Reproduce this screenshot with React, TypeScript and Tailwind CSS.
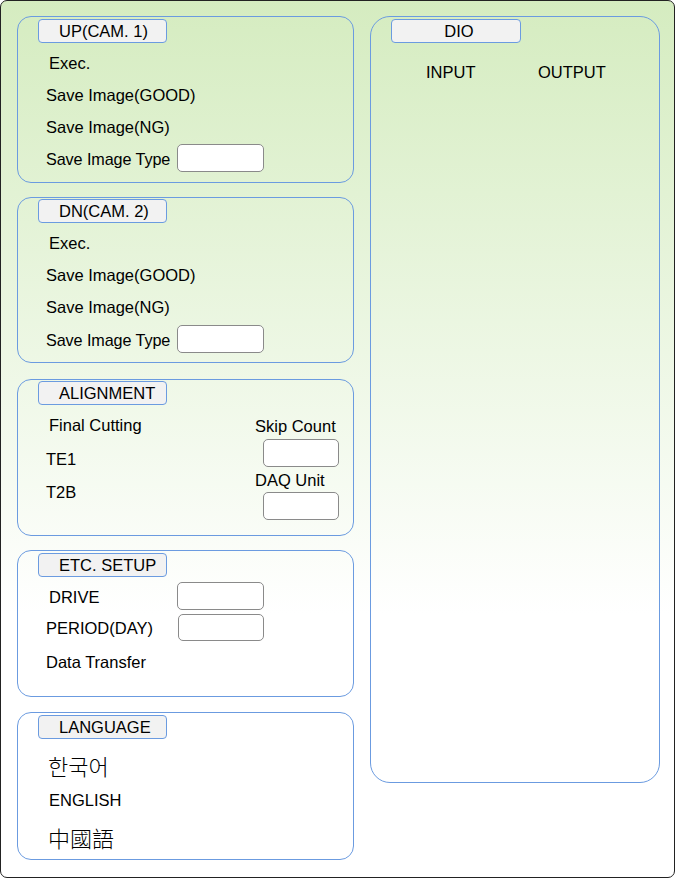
import React from 'react';

const font = { fontFamily: '"Liberation Sans", Arial, sans-serif' };

const Title: React.FC<{ label: string; className?: string }> = ({ label, className = '' }) => (
  <div
    className={`ml-[20px] w-[129px] h-[24px] shrink-0 rounded-[4px] border border-[#6b9be0] bg-[#f2f2f2] text-[16.5px] leading-[22px] text-black ${className}`}
  >
    {label}
  </div>
);

const Field: React.FC<{ className?: string }> = ({ className = '' }) => (
  <div className={`shrink-0 rounded-[5px] border border-[#8a8a8a] bg-white ${className}`} />
);

const Text: React.FC<{ children: React.ReactNode; className?: string }> = ({ children, className = '' }) => (
  <div className={`pt-[1px] text-[16.5px] leading-[20px] text-black whitespace-nowrap ${className}`}>{children}</div>
);

const Panel: React.FC<{ className?: string; children: React.ReactNode }> = ({ className = '', children }) => (
  <div className={`flex flex-col shrink-0 rounded-[14px] border border-[#6b9be0] ${className}`}>{children}</div>
);

const CamPanel: React.FC<{ title: string; top: string; className?: string; inputTop: string }> = ({
  title,
  top,
  className = '',
  inputTop,
}) => (
  <Panel className={className}>
    <Title label={title} className={`${top} pl-[20px] text-left`} />
    <Text className="mt-[9px] pl-[31px]">Exec.</Text>
    <Text className="mt-[11px] pl-[28px]">Save Image(GOOD)</Text>
    <Text className="mt-[11px] pl-[28px]">Save Image(NG)</Text>
    <div className={`flex items-center h-[28px] ${inputTop}`}>
      <Text className="w-[159px] pl-[28px] !text-[16.2px] tracking-[-0.1px]">Save Image Type</Text>
      <Field className="w-[87px] h-[28px]" />
    </div>
  </Panel>
);

export default function App() {
  return (
    <div
      style={font}
      className="w-[675px] h-[878px] border border-[#222] rounded-[7px] bg-linear-to-b from-[#d5ecc0] to-white to-70% flex gap-[16px] pl-[16px] pt-[15px]"
    >
      {/* left column */}
      <div className="flex flex-col w-[337px]">
        <CamPanel title="UP(CAM. 1)" top="mt-[2px]" inputTop="mt-[7px]" className="h-[167px]" />
        <CamPanel title="DN(CAM. 2)" top="mt-[1px]" inputTop="mt-[8px]" className="h-[166px] mt-[14px]" />

        <Panel className="h-[157px] mt-[16px]">
          <Title label="ALIGNMENT" className="mt-[1px] pl-[20px] text-left" />
          <div className="flex">
            <div className="flex flex-col w-[237px]">
              <Text className="mt-[9px] pl-[31px]">Final Cutting</Text>
              <Text className="mt-[13px] pl-[28px]">TE1</Text>
              <Text className="mt-[12px] pl-[28px]">T2B</Text>
            </div>
            <div className="flex flex-col">
              <Text className="mt-[10px]">Skip Count</Text>
              <Field className="mt-[3px] ml-[8px] w-[76px] h-[28px]" />
              <Text className="mt-[2px]">DAQ Unit</Text>
              <Field className="mt-[2px] ml-[8px] w-[76px] h-[28px]" />
            </div>
          </div>
        </Panel>

        <Panel className="h-[147px] mt-[14px]">
          <Title label="ETC. SETUP" className="mt-[2px] pl-[20px] text-left" />
          <div className="flex items-center h-[28px] mt-[5px]">
            <Text className="w-[159px] pl-[31px]">DRIVE</Text>
            <Field className="w-[87px] h-[28px]" />
          </div>
          <div className="flex items-center h-[27px] mt-[4px]">
            <Text className="w-[160px] pl-[28px]">PERIOD(DAY)</Text>
            <Field className="w-[86px] h-[27px]" />
          </div>
          <Text className="mt-[10px] pl-[28px]">Data Transfer</Text>
        </Panel>

        <Panel className="h-[148px] mt-[15px]">
          <Title label="LANGUAGE" className="mt-[2px] pl-[20px] text-left" />
          <div
            className="mt-[12px] pl-[30px] text-[22px] leading-[28px] font-light text-black"
            style={{ fontFamily: '"Noto Sans CJK KR", sans-serif' }}
          >
            한국어
          </div>
          <Text className="mt-[10px] pl-[31px]">ENGLISH</Text>
          <div
            className="mt-[13px] pl-[30px] text-[22px] leading-[28px] font-light text-black"
            style={{ fontFamily: '"Noto Sans CJK TC", sans-serif' }}
          >
            中國語
          </div>
        </Panel>
      </div>

      {/* right column */}
      <Panel className="w-[290px] h-[767px] rounded-[20px]">
        <Title label="DIO" className="mt-[2px] w-[130px] text-center pl-[6px]" />
        <div className="flex mt-[18px] pl-[55px]">
          <Text className="w-[112px]">INPUT</Text>
          <Text>OUTPUT</Text>
        </div>
      </Panel>
    </div>
  );
}
